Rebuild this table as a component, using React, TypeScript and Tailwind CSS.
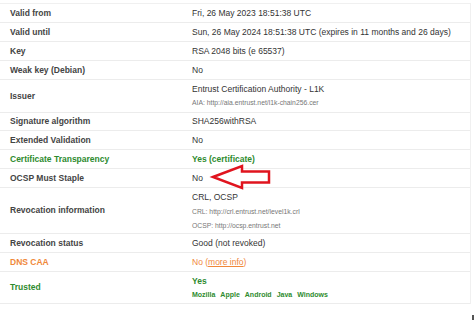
import React from "react";

type Row = {
  label: string;
  labelClass?: string;
  h: string;
  value: React.ReactNode;
};

const subCls = "text-[6.8px] text-[#777]";

const rows: Row[] = [
  { label: "Valid from", h: "h-[19px]", value: <div>Fri, 26 May 2023 18:51:38 UTC</div> },
  {
    label: "Valid until",
    h: "h-[19px]",
    value: <div>Sun, 26 May 2024 18:51:38 UTC (expires in 11 months and 26 days)</div>,
  },
  { label: "Key", h: "h-[19px]", value: <div>RSA 2048 bits (e 65537)</div> },
  { label: "Weak key (Debian)", h: "h-[19px]", value: <div>No</div> },
  {
    label: "Issuer",
    h: "h-[33px]",
    value: (
      <div className="flex flex-col">
        <div className="leading-[13px]">Entrust Certification Authority - L1K</div>
        <div className={subCls + " leading-[13px]"}>AIA: http://aia.entrust.net/l1k-chain256.cer</div>
      </div>
    ),
  },
  { label: "Signature algorithm", h: "h-[18px]", value: <div>SHA256withRSA</div> },
  { label: "Extended Validation", h: "h-[19px]", value: <div>No</div> },
  {
    label: "Certificate Transparency",
    labelClass: "text-[#2e8b2e]",
    h: "h-[19px]",
    value: <div className="font-bold text-[#2e8b2e]">Yes (certificate)</div>,
  },
  { label: "OCSP Must Staple", h: "h-[19px]", value: <div>No</div> },
  {
    label: "Revocation information",
    h: "h-[46px]",
    value: (
      <div className="flex flex-col">
        <div className="leading-[16px]">CRL, OCSP</div>
        <div className={subCls + " leading-[14px]"}>CRL: http://crl.entrust.net/level1k.crl</div>
        <div className={subCls + " leading-[14px]"}>OCSP: http://ocsp.entrust.net</div>
      </div>
    ),
  },
  { label: "Revocation status", h: "h-[19px]", value: <div>Good (not revoked)</div> },
  {
    label: "DNS CAA",
    labelClass: "text-[#f0883a]",
    h: "h-[19px]",
    value: (
      <div className="text-[#f0883a]">
        No (<span className="underline">more info</span>)
      </div>
    ),
  },
  {
    label: "Trusted",
    labelClass: "text-[#2e8b2e]",
    h: "h-[32px]",
    value: (
      <div className="flex flex-col text-[#2e8b2e] font-bold">
        <div className="leading-[14px]">Yes</div>
        <div className="flex gap-[5px] text-[7px] leading-[13px]">
          <span>Mozilla</span>
          <span>Apple</span>
          <span>Android</span>
          <span>Java</span>
          <span>Windows</span>
        </div>
      </div>
    ),
  },
];

export default function App() {
  return (
    <div
      className="relative w-[474px] h-[320px] bg-white overflow-hidden text-[8.5px] text-[#333]"
      style={{ fontFamily: '"Liberation Sans", Arial, sans-serif' }}
    >
      <div className="pt-[3px] pr-[3px]">
        <div className="border-t border-r border-[#f0f0f0]">
          {rows.map((r) => (
            <div key={r.label} className={`flex items-center border-b border-[#ececec] ${r.h}`}>
              <div className={`w-[192px] pl-[10px] font-bold ${r.labelClass ?? "text-[#444]"}`}>
                {r.label}
              </div>
              <div className="flex-1">{r.value}</div>
            </div>
          ))}
        </div>
      </div>
      <svg
        className="absolute left-0 top-0"
        width="474"
        height="320"
        viewBox="0 0 474 320"
      >
        <path
          d="M213 177 L242 166 L242 171.5 L269 171.5 L269 182.5 L242 182.5 L242 188 Z"
          fill="white"
          stroke="#e0141e"
          strokeWidth="2.5"
          strokeLinejoin="miter"
        />
      </svg>
      <div className="absolute right-0 bottom-0 w-[2px] h-[5px] bg-[#555]" />
    </div>
  );
}
